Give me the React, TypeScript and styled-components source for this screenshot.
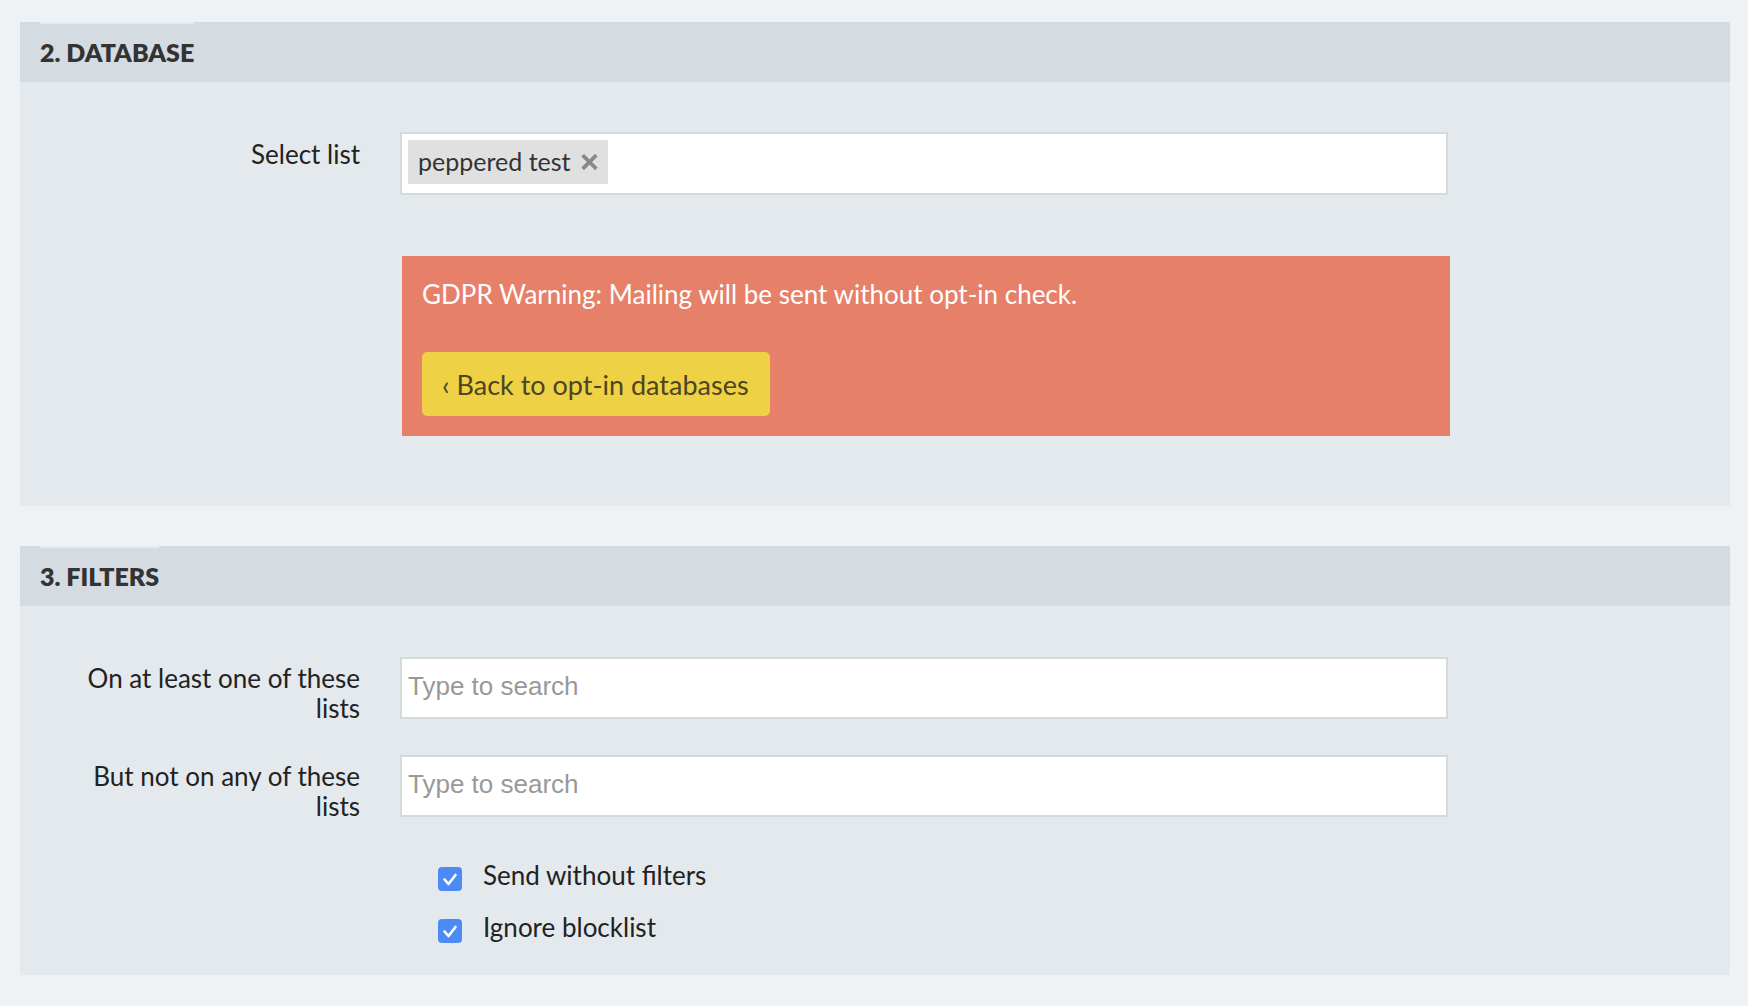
import styled, { createGlobalStyle } from "styled-components";

const GlobalStyle = createGlobalStyle`
  body {
    margin: 0;
    background-color: #eef2f5;
    font-family: Lato, "Noto Sans", sans-serif;
    color: #222;
  }
`;

const StyledPage = styled.div`
  display: flex;
  flex-direction: column;
  gap: 40px;
  padding: 22px 18px 30px 20px;
`;

const StyledSection = styled.section`
  background-color: #e4e9ed;
`;

const StyledSectionHeader = styled.header`
  display: flex;
  align-items: stretch;
  height: 60px;
  padding: 0 20px;
  background-color: #d4dbe1;
`;

const StyledSectionTitle = styled.h2`
  display: flex;
  align-items: center;
  margin: 0;
  padding-bottom: 2px;
  border-top: 2px solid #e6ebee;
  font-size: 25px;
  font-weight: 800;
  color: #333;
`;

const StyledSectionBody = styled.div<{ pad: string }>`
  display: grid;
  grid-template-columns: 340px 1048px;
  align-items: start;
  column-gap: 40px;
  padding: ${({ pad }) => pad};
`;

const StyledLabel = styled.label<{ top: number }>`
  grid-column: 1;
  box-sizing: border-box;
  height: 62px;
  padding-top: ${({ top }) => top}px;
  text-align: right;
  font-size: 26px;
  line-height: 30px;
  color: #222;
`;

const StyledField = styled.div<{ gapAfter: number; tall?: boolean }>`
  grid-column: 2;
  display: flex;
  align-items: center;
  box-sizing: border-box;
  height: ${({ tall }) => (tall ? 63 : 62)}px;
  margin-bottom: ${({ gapAfter }) => gapAfter}px;
  padding: 0 6px;
  border: 2px solid #d3dbdc;
  background-color: #fff;
`;

const StyledSearchInput = styled.input`
  flex: 1;
  padding: 0 0 4px;
  border: none;
  outline: none;
  background: transparent;
  font-family: "Liberation Sans", Arial, sans-serif;
  font-size: 26px;
  color: #333;

  &::placeholder {
    color: #999;
  }
`;

const StyledTag = styled.span`
  display: inline-flex;
  align-items: center;
  gap: 10px;
  box-sizing: border-box;
  align-self: flex-start;
  height: 44px;
  margin-top: 6px;
  padding: 0 10px 3px 10px;
  background-color: #e0e0e0;
  font-size: 25px;
  color: #333;

  svg {
    display: block;
    margin-top: 3px;
  }
`;

const StyledWarning = styled.div`
  grid-column: 2;
  margin: 0 -2px 0 2px;
  padding: 20px;
  background-color: #e78068;
`;

const StyledWarningText = styled.p`
  margin: 0 0 40px;
  font-size: 26px;
  line-height: 36px;
  color: #fff;
`;

const StyledBackButton = styled.button`
  height: 64px;
  padding: 0 21px 0 20px;
  border: none;
  border-radius: 5px;
  background-color: #eed145;
  font-family: inherit;
  font-size: 27px;
  color: #4d4421;
  cursor: pointer;
`;

const StyledCheckList = styled.div`
  grid-column: 2;
  display: flex;
  flex-direction: column;
  gap: 20px;
  padding-left: 38px;
`;

const StyledCheckRow = styled.label`
  display: flex;
  align-items: center;
  gap: 21px;
  font-size: 26px;
  line-height: 32px;
  color: #222;
`;

const StyledCheckBox = styled.span`
  display: flex;
  align-items: center;
  justify-content: center;
  width: 24px;
  height: 24px;
  margin-top: 8px;
  border-radius: 4px;
  background-color: #4c8bf5;
`;

function CheckBox() {
  return (
    <StyledCheckBox>
      <svg width="24" height="24" viewBox="0 0 24 24">
        <path d="M6.5 12.5l4 4.5 7-9" fill="none" stroke="#fff" strokeWidth="2.6" strokeLinecap="round" strokeLinejoin="round" />
      </svg>
    </StyledCheckBox>
  );
}

export default function App() {
  return (
    <>
      <GlobalStyle />
      <StyledPage>
        <StyledSection>
          <StyledSectionHeader>
            <StyledSectionTitle>2. DATABASE</StyledSectionTitle>
          </StyledSectionHeader>
          <StyledSectionBody pad="50px 0 70px">
            <StyledLabel top={7}>Select list</StyledLabel>
            <StyledField gapAfter={61} tall>
              <StyledTag>
                peppered test
                <svg width="17" height="16" viewBox="0 0 17 16">
                  <path d="M3 2.5l11 11M14 2.5l-11 11" stroke="#888" strokeWidth="3.8" strokeLinecap="square" />
                </svg>
              </StyledTag>
            </StyledField>
            <StyledWarning>
              <StyledWarningText>GDPR Warning: Mailing will be sent without opt-in check.</StyledWarningText>
              <StyledBackButton>‹ Back to opt-in databases</StyledBackButton>
            </StyledWarning>
          </StyledSectionBody>
        </StyledSection>

        <StyledSection>
          <StyledSectionHeader>
            <StyledSectionTitle>3. FILTERS</StyledSectionTitle>
          </StyledSectionHeader>
          <StyledSectionBody pad="51px 0 32px">
            <StyledLabel top={6}>
              On at least one of these
              <br />
              lists
            </StyledLabel>
            <StyledField gapAfter={36}>
              <StyledSearchInput placeholder="Type to search" />
            </StyledField>
            <StyledLabel top={6}>
              But not on any of these
              <br />
              lists
            </StyledLabel>
            <StyledField gapAfter={42}>
              <StyledSearchInput placeholder="Type to search" />
            </StyledField>
            <StyledCheckList>
              <StyledCheckRow>
                <CheckBox />
                Send without filters
              </StyledCheckRow>
              <StyledCheckRow>
                <CheckBox />
                Ignore blocklist
              </StyledCheckRow>
            </StyledCheckList>
          </StyledSectionBody>
        </StyledSection>
      </StyledPage>
    </>
  );
}
